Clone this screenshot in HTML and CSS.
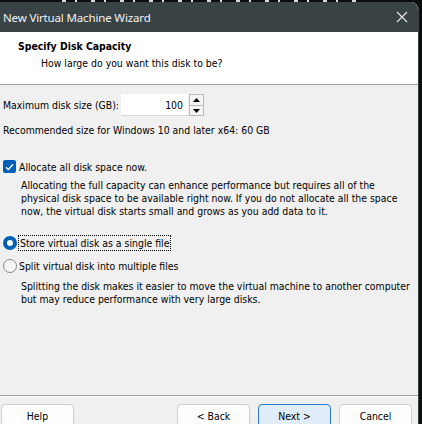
FILE: index.html
```html
<!DOCTYPE html>
<html>
<head>
<meta charset="utf-8">
<link rel="stylesheet" href="styles.css">
</head>
<body>
<div class="behind"></div>
<div class="window">
  <div class="titlebar">
    <span class="title">New Virtual Machine Wizard</span>
    <svg class="close" width="12" height="12" viewBox="0 0 12 12"><path d="M1 1 L11 11 M11 1 L1 11" stroke="#e8e8e8" stroke-width="1.1" fill="none"/></svg>
  </div>
  <div class="header">
    <div class="h-title">Specify Disk Capacity</div>
    <div class="h-sub">How large do you want this disk to be?</div>
  </div>
  <div class="content">
    <div class="size-row">
      <span class="label">Maximum disk size (GB):</span>
      <div class="spin">
        <div class="spin-input">100</div>
        <div class="spin-btns">
          <div class="spin-btn"><svg width="7" height="4" viewBox="0 0 7 4"><path d="M0 4 L3.5 0 L7 4Z" fill="#000"/></svg></div>
          <div class="spin-btn"><svg width="7" height="4" viewBox="0 0 7 4"><path d="M0 0 L3.5 4 L7 0Z" fill="#000"/></svg></div>
        </div>
      </div>
    </div>
    <div class="rec">Recommended size for Windows 10 and later x64: 60 GB</div>
    <div class="check-row">
      <span class="checkbox"><svg width="9" height="8" viewBox="0 0 9 8"><path d="M1 4.2 L3.4 6.5 L8 1.2" stroke="#fff" stroke-width="1.3" fill="none"/></svg></span>
      <span>Allocate all disk space now.</span>
    </div>
    <p class="desc">Allocating the full capacity can enhance performance but requires all of the physical disk space to be available right now. If you do not allocate all the space now, the virtual disk starts small and grows as you add data to it.</p>
    <div class="radio-row first">
      <span class="radio on"></span>
      <span class="focus">Store virtual disk as a single file</span>
    </div>
    <div class="radio-row">
      <span class="radio"></span>
      <span>Split virtual disk into multiple files</span>
    </div>
    <p class="desc desc2">Splitting the disk makes it easier to move the virtual machine to another computer but may reduce performance with very large disks.</p>
  </div>
  <div class="footer">
    <button class="btn">Help</button>
    <div class="spacer"></div>
    <button class="btn">&lt; Back</button>
    <button class="btn primary">Next &gt;</button>
    <button class="btn">Cancel</button>
  </div>
</div>
</body>
</html>
```
FILE: styles.css
```css
* { box-sizing: border-box; }
html, body { margin: 0; padding: 0; }
body {
  width: 422px;
  height: 424px;
  overflow: hidden;
  background: #0b0d0e;
  font-family: "DejaVu Sans Condensed", "DejaVu Sans", sans-serif;
  font-stretch: condensed;
  font-size: 10.4px;
  color: #000;
}
.behind {
  height: 2px;
  background: repeating-linear-gradient(90deg, #0b0d0e 0 14px, #d8d8d8 14px 18px, #0b0d0e 18px 27px, #e0e0e0 27px 29px);
  margin: 0 60px 0 48px;
}
.window {
  width: 419px;
  height: 422px;
  background: #f0f0f0;
  border-top-right-radius: 8px;
  border-right: 1px solid #3a4244;
  overflow: hidden;
  display: flex;
  flex-direction: column;
}
.titlebar {
  height: 30px;
  background: #394345;
  color: #f2f2f2;
  display: flex;
  align-items: center;
  justify-content: space-between;
  padding: 0 8px 0 3px;
  flex: none;
}
.title {
  font-family: "Noto Sans", "Open Sans", sans-serif;
  font-stretch: normal;
  font-size: 11.5px;
  letter-spacing: -0.15px;
}
.close { margin-right: 2px; }
.header {
  height: 53px;
  background: #fff;
  border-bottom: 1px solid #a0a0a0;
  padding: 8px 0 0 18px;
  flex: none;
}
.h-title { font-weight: bold; line-height: 13px; }
.h-sub { margin: 4px 0 0 23px; line-height: 13px; }
.content {
  flex: 1;
  padding: 9px 0 0 3px;
}
.size-row { display: flex; align-items: center; height: 22px; }
.label { width: 118px; }
.spin { display: flex; align-items: center; height: 22px; }
.spin-input {
  width: 67px;
  height: 22px;
  background: #fff;
  border-bottom: 1px solid #d8d8d8;
  text-align: right;
  padding-right: 5px;
  line-height: 22px;
}
.spin-btns {
  display: flex;
  flex-direction: column;
  margin-left: 1px;
  border: 1px solid #b9b9b9;
  background: #f5f5f5;
}
.spin-btn {
  width: 13px;
  height: 10px;
  display: flex;
  align-items: center;
  justify-content: center;
}
.spin-btn + .spin-btn { border-top: 1px solid #b9b9b9; }
.rec { margin-top: 8px; line-height: 13px; }
.check-row { display: flex; align-items: center; margin-top: 22px; height: 15px; gap: 3px; }
.checkbox {
  width: 13px;
  height: 13px;
  background: #005fb8;
  border-radius: 2px;
  display: flex;
  align-items: center;
  justify-content: center;
}
.desc {
  margin: 5px 2px 0 18px;
  line-height: 13px;
}
.radio-row { display: flex; align-items: center; height: 17px; gap: 2px; margin-top: 6px; }
.radio-row.first { margin-top: 16px; }
.radio {
  width: 14px;
  height: 14px;
  border-radius: 50%;
  border: 1px solid #8a8a8a;
  background: #f6f6f6;
}
.radio.on {
  border: 4px solid #005fb8;
  background: #fff;
}
.focus { outline: 1px dotted #000; outline-offset: 0; padding: 0 1px; line-height: 14px; }
.desc2 { margin-top: 6px; }
.footer {
  flex: none;
  height: 29px;
  border-top: 1px solid #a0a0a0;
  box-shadow: inset 0 1px 0 #fff;
  display: flex;
  align-items: flex-start;
  padding: 8px 6px 0 1px;
  gap: 8px;
}
.spacer { flex: 1; }
.btn {
  width: 73px;
  height: 23px;
  background: #fdfdfd;
  border: 1px solid #d0d0d0;
  border-radius: 4px;
  font-family: inherit;
  font-stretch: condensed;
  font-size: 10.4px;
  color: #000;
  padding: 0;
}
.btn.primary {
  background: #e0ecf8;
  border-color: #2a7bd0;
}
```
